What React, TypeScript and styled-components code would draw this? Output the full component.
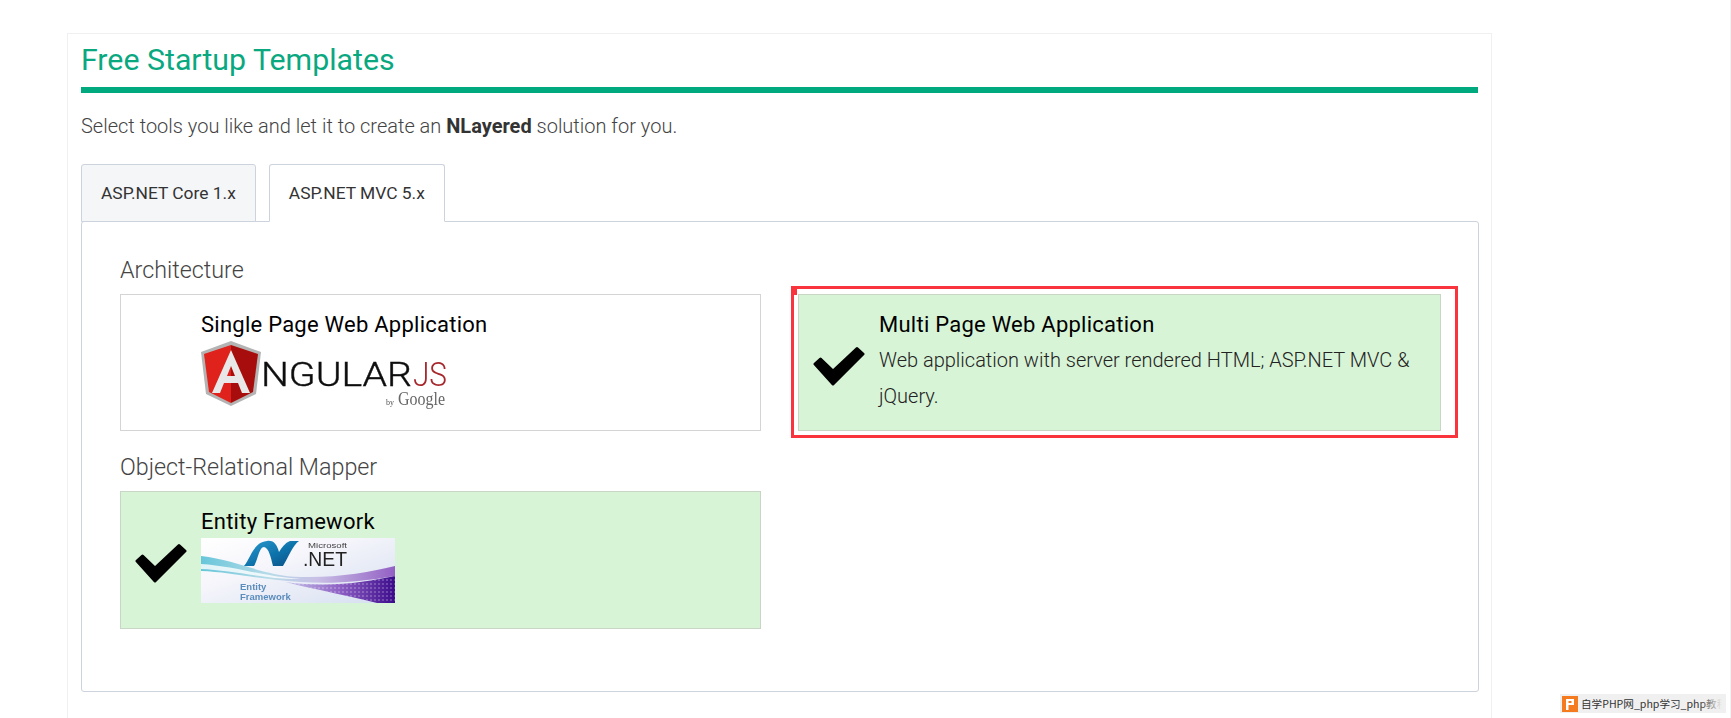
import React from "react";
import styled, { createGlobalStyle } from "styled-components";

const Global = createGlobalStyle`
  html, body { margin: 0; padding: 0; background: #fff; overflow: hidden; }
  body { font-family: Roboto, "Liberation Sans", sans-serif; color: #333; }
`;

const Page = styled.div`
  position: relative;
  height: 718px;
  padding: 33px 0 0 67px;
  box-sizing: border-box;
  overflow: hidden;
`;
const Portlet = styled.section`
  width: 1425px;
  height: 720px;
  box-sizing: border-box;
  border: 1px solid #eef0f2;
  padding: 0 13px;
`;
const Title = styled.h2`
  margin: 0;
  height: 53px;
  border-bottom: 6px solid #00a97e;
  box-sizing: content-box;
  font-size: 30.3px;
  font-weight: 400;
  line-height: 52px;
  color: #0aa87f;
`;
const Intro = styled.p`
  margin: 20px 0 0;
  font-size: 20px;
  font-weight: 300;
  line-height: 26px;
  color: #444;
  & b { font-weight: 700; color: #333; }
`;
const Tabs = styled.div`
  display: flex;
  gap: 13px;
  margin-top: 25px;
  position: relative;
  z-index: 1;
  margin-bottom: -1px;
`;
const Tab = styled.div<{ $active?: boolean }>`
  height: 58px;
  box-sizing: border-box;
  padding: 0 19px 1px;
  display: flex;
  align-items: center;
  font-size: 17.4px;
  color: #333;
  border: 1px solid #cdd3dc;
  border-radius: 3px 3px 0 0;
  background: ${(p) => (p.$active ? "#fff" : "#f5f6f8")};
  border-bottom-color: ${(p) => (p.$active ? "#fff" : "#cdd3dc")};
`;
const Panel = styled.div`
  height: 471px;
  width: 1398px;
  box-sizing: border-box;
  border: 1px solid #cdd3dc;
  border-radius: 3px;
  padding: 30px 36px 0 38px;
  display: grid;
  grid-template-columns: 641px 643px;
  column-gap: 37px;
  grid-template-rows: 42px 137px 60px 138px;
`;
const GroupLabel = styled.div`
  grid-column: 1 / 3;
  font-size: 23.3px;
  font-weight: 300;
  line-height: 30px;
  color: #444;
  align-self: end;
  padding-bottom: 9px;
`;
const Card = styled.div<{ $selected?: boolean }>`
  position: relative;
  display: flex;
  box-sizing: border-box;
  border: 1px solid ${(p) => (p.$selected ? "#c9d6c5" : "#d4d4d4")};
  background: ${(p) => (p.$selected ? "#d8f4d6" : "#fff")};
`;
const CheckColumn = styled.div`
  width: 80px;
  flex: none;
  display: flex;
  align-items: center;
  padding-left: 14px;
  box-sizing: border-box;
  padding-top: 6px;
`;
const CardBody = styled.div`
  padding-top: 17px;
  min-width: 0;
`;
const CardTitle = styled.div`
  font-size: 22px;
  line-height: 25px;
  letter-spacing: 0.25px;
  color: #000;
`;
const CardText = styled.div`
  margin-top: 5px;
  font-size: 20px;
  font-weight: 300;
  line-height: 36px;
  color: #222;
  width: 545px;
`;
const Logo = styled.svg`
  display: block;
  margin-top: 4px;
`;
const Annotation = styled.div`
  position: absolute;
  left: -8px;
  top: -9px;
  width: 667px;
  height: 152px;
  box-sizing: border-box;
  border: 3px solid #f9343c;
  pointer-events: none;
  &::before {
    content: "";
    position: absolute;
    left: 0;
    top: 0;
    width: 3px;
    height: 6px;
    background: #f9343c;
  }
`;
const Watermark = styled.div`
  position: absolute;
  left: 1560px;
  top: 694px;
  width: 166px;
  height: 19px;
  display: flex;
  align-items: center;
  gap: 3px;
  padding-left: 2px;
  box-sizing: border-box;
  overflow: hidden;
  background: #f0f0f0;
  font-family: "Noto Sans CJK SC", "Liberation Sans", sans-serif;
  font-size: 10.6px;
  color: #333;
  white-space: nowrap;
  &::after {
    content: "";
    position: absolute;
    right: 0;
    top: 0;
    bottom: 0;
    width: 26px;
    background: linear-gradient(to right, rgba(240,240,240,0), #f0f0f0 85%);
  }
`;
const WatermarkMark = styled.svg`
  flex: none;
`;
const EdgeLine = styled.div`
  position: absolute;
  right: 0;
  top: 0;
  bottom: 0;
  width: 1px;
  background: #f2f2f2;
`;

const Check = () => (
  <svg width="52" height="40" viewBox="0 0 52 40" aria-hidden="true">
    <path
      d="M2 18 L7.5 13 L20 25 L44 2.5 L50 8 L20 38 Z"
      fill="#000"
      stroke="#000"
      strokeWidth="3"
      strokeLinejoin="round"
    />
  </svg>
);

const AngularLogo = () => (
  <Logo width="247" height="68" viewBox="0 0 247 68">
    <defs>
      <filter id="ngsoft" x="-5%" y="-5%" width="110%" height="110%">
        <feGaussianBlur stdDeviation="0.45" />
      </filter>
    </defs>
    <g filter="url(#ngsoft)">
      <polygon points="30,0 60,11 55,53 30,65 5,53 0,11" fill="#b4b4b4" />
      <polygon points="30,4 3,13 8,51 30,62" fill="#e0201a" />
      <polygon points="30,4 57,13 52,51 30,62" fill="#a8110c" />
      <path
        d="M30 9 L11 52 H19 L23 42 H37 L41 52 H49 Z M26 35 L30 25 L34 35 Z"
        fill="#e8e8e8"
        fillRule="evenodd"
      />
      <text x="60" y="45" fontFamily="Roboto, sans-serif" fontSize="34" fontWeight="300" stroke="#111" strokeWidth="0.4" fill="#111" textLength="151" lengthAdjust="spacingAndGlyphs">NGULAR</text>
      <text x="212" y="45" fontFamily="Roboto, sans-serif" fontSize="34" fontWeight="300" fill="#a6262a" textLength="34" lengthAdjust="spacingAndGlyphs">JS</text>
      <text x="185" y="64" fontFamily="'Liberation Serif', serif" fontSize="8" fill="#555">by</text>
      <text x="197" y="64" fontFamily="'Liberation Serif', serif" fontSize="18" fill="#666" textLength="47" lengthAdjust="spacingAndGlyphs">Google</text>
    </g>
  </Logo>
);

const DotNetLogo = () => (
  <Logo width="194" height="65" viewBox="0 0 194 65">
    <defs>
      <linearGradient id="efbg" x1="0" x2="1" y1="0" y2="1">
        <stop offset="0" stopColor="#ffffff" />
        <stop offset="0.4" stopColor="#f5f5fb" />
        <stop offset="1" stopColor="#d5dff0" />
      </linearGradient>
      <linearGradient id="efwave" x1="0" x2="1" y1="0" y2="0">
        <stop offset="0" stopColor="#67c6da" />
        <stop offset="0.35" stopColor="#b7dbe8" />
        <stop offset="0.6" stopColor="#c9bfe6" />
        <stop offset="1" stopColor="#9360c4" />
      </linearGradient>
      <linearGradient id="eflow" x1="0" x2="1" y1="0" y2="0">
        <stop offset="0" stopColor="#c8c6ea" />
        <stop offset="0.5" stopColor="#8d5fc4" />
        <stop offset="1" stopColor="#3c0c8c" />
      </linearGradient>
      <linearGradient id="efn" x1="0" x2="1" y1="0" y2="1">
        <stop offset="0" stopColor="#2a9bcf" />
        <stop offset="0.6" stopColor="#0b6ea6" />
        <stop offset="1" stopColor="#0a4e80" />
      </linearGradient>
      <pattern id="efdots" width="4" height="4" patternUnits="userSpaceOnUse">
        <circle cx="2" cy="2" r="1" fill="#fff" opacity="0.28" />
      </pattern>
      <filter id="efsoft" x="0" y="0" width="100%" height="100%">
        <feGaussianBlur stdDeviation="0.4" />
      </filter>
    </defs>
    <rect width="194" height="65" fill="url(#efbg)" />
    <g filter="url(#efsoft)">
      <path d="M0 18 C36 22 62 38 100 39 C135 40 170 34 194 28 V38 C160 44 130 46 100 44 C60 42 30 34 0 33 Z" fill="url(#efwave)" />
      <path d="M0 26 C34 28 64 39 100 41 C70 42 30 32 0 31 Z" fill="#fff" opacity="0.8" />
      <path d="M84 44 C130 50 165 44 194 38 V65 H176 C150 58 116 52 84 44 Z" fill="url(#eflow)" />
      <path d="M84 44 C130 50 165 44 194 38 V65 H176 C150 58 116 52 84 44 Z" fill="url(#efdots)" />
      <path d="M43 28 C49 22 52 4 66 3 C73 2 76 7 78 14 C81 9 84 5 89 3 H98 C92 7 88 18 82 28 H72 C70 20 68 10 63 9 C58 9 57 22 53 28 Z" fill="url(#efn)" />
      <text x="107" y="10" fontFamily="'Liberation Sans', sans-serif" fontSize="8" fill="#444" textLength="39" lengthAdjust="spacingAndGlyphs">Microsoft</text>
      <text x="102" y="28" fontFamily="'Liberation Sans', sans-serif" fontSize="21" fill="#222" textLength="44" lengthAdjust="spacingAndGlyphs">.NET</text>
      <text x="39" y="52" fontFamily="'Liberation Sans', sans-serif" fontSize="9.5" fontWeight="700" fill="#5a8cbc">Entity</text>
      <text x="39" y="62" fontFamily="'Liberation Sans', sans-serif" fontSize="9.5" fontWeight="700" fill="#5a8cbc">Framework</text>
    </g>
  </Logo>
);

export default function App() {
  return (
    <Page>
      <Global />
      <Portlet>
        <Title>Free Startup Templates</Title>
        <Intro>
          Select tools you like and let it to create an <b>NLayered</b> solution for you.
        </Intro>
        <Tabs>
          <Tab>ASP.NET Core 1.x</Tab>
          <Tab $active>ASP.NET MVC 5.x</Tab>
        </Tabs>
        <Panel>
          <GroupLabel>Architecture</GroupLabel>
          <Card>
            <CheckColumn />
            <CardBody>
              <CardTitle>Single Page Web Application</CardTitle>
              <AngularLogo />
            </CardBody>
          </Card>
          <Card $selected>
            <CheckColumn>
              <Check />
            </CheckColumn>
            <CardBody>
              <CardTitle>Multi Page Web Application</CardTitle>
              <CardText>Web application with server rendered HTML; ASP.NET MVC &amp; jQuery.</CardText>
            </CardBody>
            <Annotation />
          </Card>
          <GroupLabel>Object-Relational Mapper</GroupLabel>
          <Card $selected>
            <CheckColumn>
              <Check />
            </CheckColumn>
            <CardBody>
              <CardTitle>Entity Framework</CardTitle>
              <DotNetLogo />
            </CardBody>
          </Card>
        </Panel>
      </Portlet>
      <Watermark>
        <WatermarkMark width="16" height="16" viewBox="0 0 16 16">
          <rect width="16" height="16" fill="#f47b20" />
          <path d="M4 14 V3 H12 V9 H6.5 V14 Z M6.5 5 V7 H9.5 V5 Z" fill="#fff" fillRule="evenodd" />
        </WatermarkMark>
        自学PHP网_php学习_php教程
      </Watermark>
      <EdgeLine />
    </Page>
  );
}
